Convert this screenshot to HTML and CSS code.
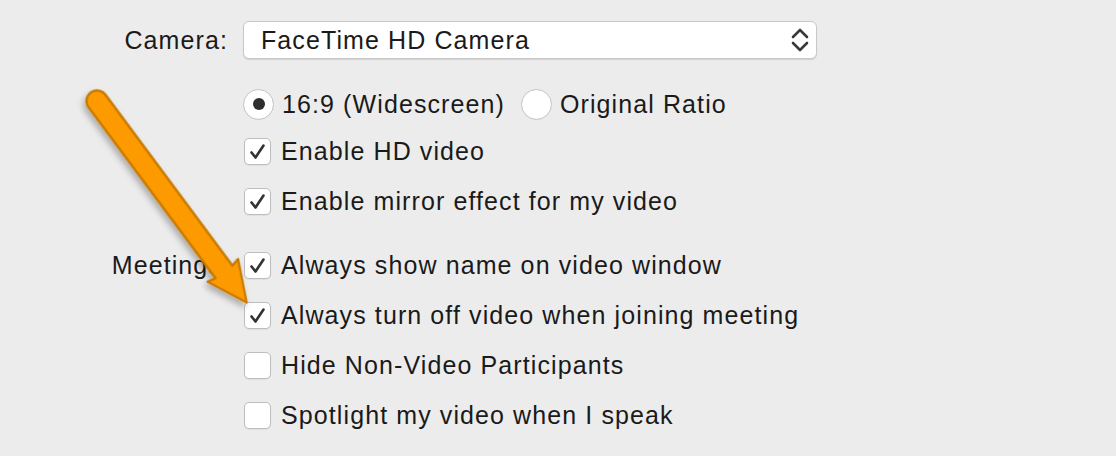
FILE: index.html
```html
<!DOCTYPE html>
<html>
<head>
<meta charset="utf-8">
<link rel="stylesheet" href="styles.css">
</head>
<body>
<div class="page">
  <div class="form">
    <div class="label cam-label">Camera:</div>
    <div class="select">
      <span class="select-text">FaceTime HD Camera</span>
      <svg class="chev" width="18" height="26" viewBox="0 0 18 26">
        <path d="M2 10 L9 3 L16 10" fill="none" stroke="#3a3a3a" stroke-width="2.6" stroke-linecap="round" stroke-linejoin="round"/>
        <path d="M2 16 L9 23 L16 16" fill="none" stroke="#3a3a3a" stroke-width="2.6" stroke-linecap="round" stroke-linejoin="round"/>
      </svg>
    </div>

    <div class="label"></div>
    <div class="group">
      <div class="row radio-row">
        <span class="radio on"></span><span class="txt">16:9 (Widescreen)</span>
        <span class="radio second"></span><span class="txt">Original Ratio</span>
      </div>
      <div class="row"><span class="check"><svg class="tick" width="27" height="27" viewBox="0 0 27 27"><path d="M7.5 14.5 L11.5 19.5 L19.5 7.5" fill="none" stroke="#333" stroke-width="2.6" stroke-linecap="round" stroke-linejoin="round"/></svg></span><span class="txt">Enable HD video</span></div>
      <div class="row"><span class="check"><svg class="tick" width="27" height="27" viewBox="0 0 27 27"><path d="M7.5 14.5 L11.5 19.5 L19.5 7.5" fill="none" stroke="#333" stroke-width="2.6" stroke-linecap="round" stroke-linejoin="round"/></svg></span><span class="txt">Enable mirror effect for my video</span></div>
    </div>

    <div class="label meet-label">Meetings:</div>
    <div class="group meet-group">
      <div class="row"><span class="check"><svg class="tick" width="27" height="27" viewBox="0 0 27 27"><path d="M7.5 14.5 L11.5 19.5 L19.5 7.5" fill="none" stroke="#333" stroke-width="2.6" stroke-linecap="round" stroke-linejoin="round"/></svg></span><span class="txt">Always show name on video window</span></div>
      <div class="row"><span class="check"><svg class="tick" width="27" height="27" viewBox="0 0 27 27"><path d="M7.5 14.5 L11.5 19.5 L19.5 7.5" fill="none" stroke="#333" stroke-width="2.6" stroke-linecap="round" stroke-linejoin="round"/></svg></span><span class="txt">Always turn off video when joining meeting</span></div>
      <div class="row"><span class="check"></span><span class="txt">Hide Non-Video Participants</span></div>
      <div class="row"><span class="check"></span><span class="txt">Spotlight my video when I speak</span></div>
    </div>
  </div>

  <svg class="arrow" width="1116" height="456" viewBox="0 0 1116 456">
    <defs>
      <filter id="sh" x="-20%" y="-20%" width="140%" height="140%">
        <feDropShadow dx="2" dy="4" stdDeviation="3" flood-color="#000" flood-opacity="0.28"/>
      </filter>
    </defs>
    <g transform="translate(97 101) rotate(53.4)" filter="url(#sh)">
      <path d="M0 -10.5 L213 -10.5 L211 -19 L251 0 L211 19 L213 10.5 L0 10.5 A10.5 10.5 0 0 1 0 -10.5 Z"
            fill="#fd9a05" stroke="#c97a06" stroke-width="2.4" stroke-linejoin="round"/>
    </g>
  </svg>
</div>
</body>
</html>
```

FILE: styles.css
```css
html, body {
  margin: 0;
  padding: 0;
  background: #ececec;
}
body {
  width: 1116px;
  height: 456px;
  overflow: hidden;
  font-family: "Liberation Sans", Arial, sans-serif;
  font-size: 25px;
  letter-spacing: 1.1px;
  color: #1a1a1a;
}
.page {
  position: relative;
  width: 1116px;
  height: 456px;
}
.form {
  display: grid;
  grid-template-columns: 243px 574px;
  padding-top: 21px;
}
.label {
  text-align: right;
  padding-right: 15px;
}
.cam-label {
  line-height: 38px;
}
.meet-label {
  margin-top: 14px;
  padding-top: 11px;
  line-height: 28px;
  padding-right: 13px;
}
.select {
  box-sizing: border-box;
  height: 38px;
  background: #fff;
  border: 1px solid #c9c9c9;
  border-radius: 6px;
  box-shadow: 0 1px 1px rgba(0,0,0,0.12);
  display: flex;
  align-items: center;
  justify-content: space-between;
  padding: 0 7px 0 17px;
}
.select-text {
  line-height: 36px;
}
.chev {
  display: block;
}
.group {
  margin-top: 23px;
  display: flex;
  flex-direction: column;
}
.meet-group {
  margin-top: 14px;
}
.row {
  height: 50px;
  display: flex;
  align-items: center;
}
.radio-row {
  height: 44px;
}
.txt {
  white-space: nowrap;
}
.radio {
  box-sizing: border-box;
  width: 31px;
  height: 31px;
  border-radius: 50%;
  background: #fff;
  border: 1px solid #c4c4c4;
  box-shadow: inset 0 -1px 1px rgba(0,0,0,0.04);
  margin-right: 8px;
  display: flex;
  align-items: center;
  justify-content: center;
  flex: none;
}
.radio.on::after {
  content: "";
  width: 12px;
  height: 12px;
  border-radius: 50%;
  background: #2e2e2e;
}
.radio.second {
  margin-left: 16px;
}
.check {
  box-sizing: border-box;
  width: 27px;
  height: 27px;
  margin-left: 1px;
  margin-right: 10px;
  border-radius: 5px;
  background: #fff;
  border: 1px solid #bdbdbd;
  box-shadow: 0 1px 1px rgba(0,0,0,0.06);
  position: relative;
  flex: none;
}
.tick {
  position: absolute;
  left: -1px;
  top: -1px;
  display: block;
}
.arrow {
  position: absolute;
  left: 0;
  top: 0;
  pointer-events: none;
}
```
